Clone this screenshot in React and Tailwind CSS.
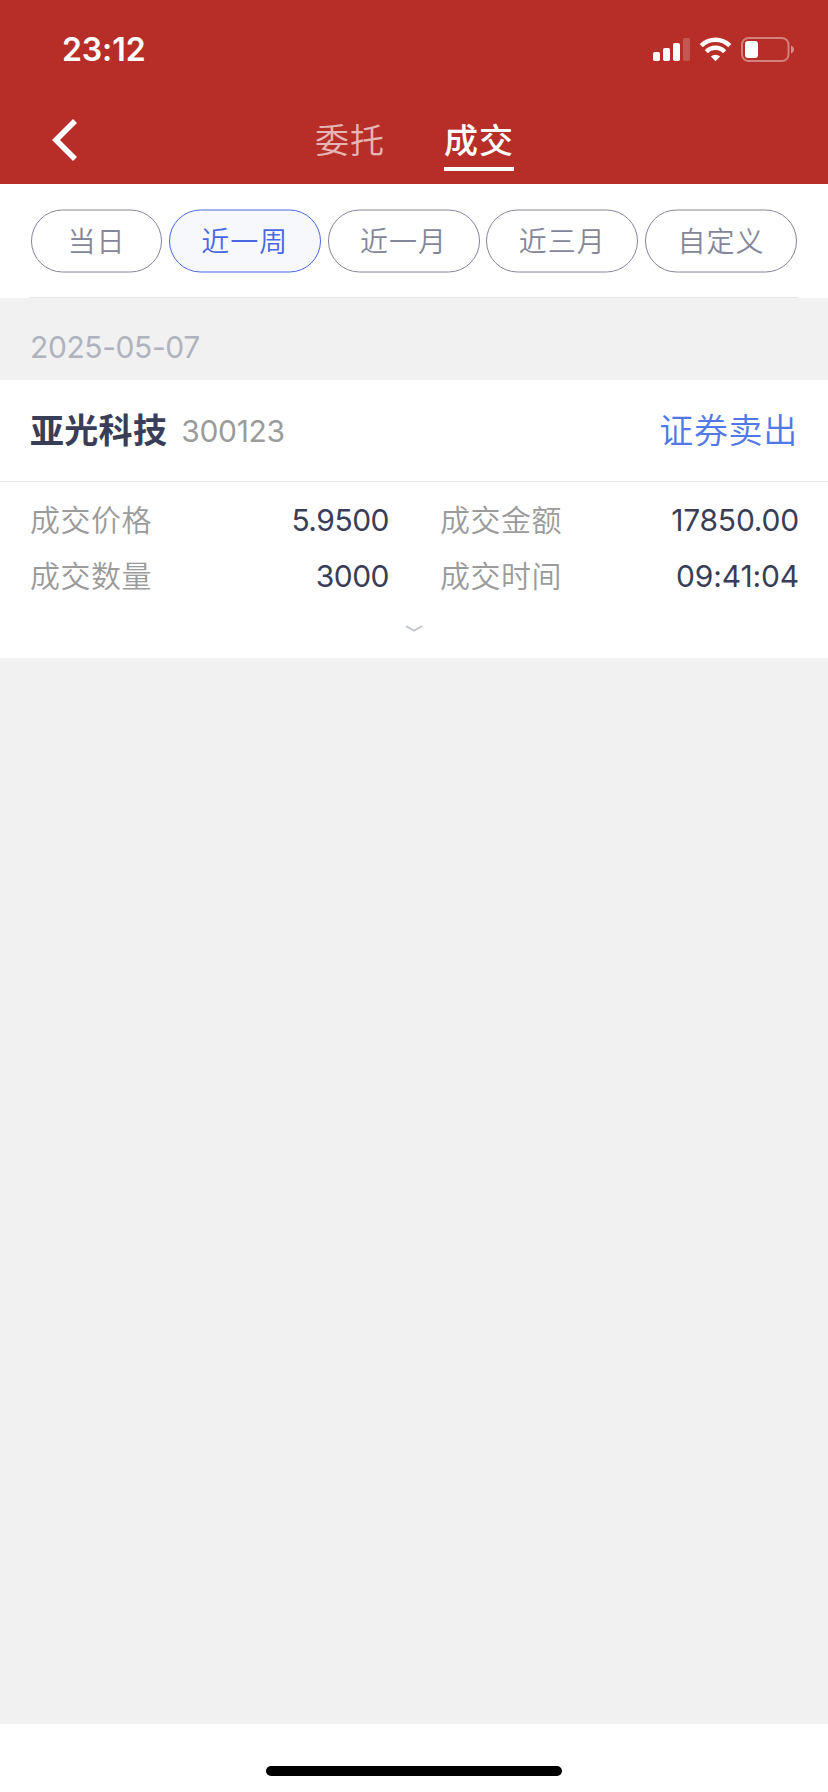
const FILTERS = [
  { label: '当日', width: 'w-[131px]' },
  { label: '近一周', width: 'w-[152px]', active: true },
  { label: '近一月', width: 'w-[152px]' },
  { label: '近三月', width: 'w-[152px]' },
  { label: '自定义', width: 'w-[152px]' },
];

const DETAILS = [
  { label: '成交价格', value: '5.9500', tracking: 'tracking-[-0.5px]' },
  { label: '成交金额', value: '17850.00', tracking: 'tracking-[-0.2px]' },
  { label: '成交数量', value: '3000', tracking: 'tracking-[-0.5px]' },
  { label: '成交时间', value: '09:41:04', tracking: 'tracking-[-0.15px]' },
];

function StatusIcons() {
  return (
    <svg className="h-[30px] w-[144px]" viewBox="650 34 144 30" fill="none">
      <g fill="#fff">
        <rect x="653" y="52" width="7" height="9" rx="1.8" />
        <rect x="663" y="48" width="7" height="13" rx="1.8" />
        <rect x="673" y="43" width="7" height="18" rx="1.8" />
        <rect x="683" y="38" width="7" height="23" rx="1.8" opacity="0.2" />
      </g>
      <g stroke="#fff" strokeWidth="4.4">
        <path d="M701.2 45.6A20.3 20.3 0 0 1 729.8 45.6" />
        <path d="M706.4 51.7A12.6 12.6 0 0 1 724.6 51.7" />
      </g>
      <path d="M710.9 56.6A6.4 6.4 0 0 1 720.1 56.6L715.5 61.2Z" fill="#fff" />
      <rect x="742" y="38" width="46.5" height="23" rx="6.5" stroke="#fff" strokeOpacity="0.4" strokeWidth="2" />
      <rect x="745" y="41" width="13" height="17" rx="3" fill="#fff" />
      <path d="M791 45.5C795 47 795 52 791 53.5Z" fill="#fff" fillOpacity="0.45" />
    </svg>
  );
}

export default function App() {
  return (
    <div className="flex h-[1792px] w-[828px] flex-col bg-[#f1f1f1] font-['Inter','Noto_Sans_CJK_SC',sans-serif]">
      <header className="h-[184px] bg-[#b72e28] text-white">
        <div className="flex h-[96px] items-start justify-between pt-[34px] pr-[34px] pl-[62px]">
          <span className="text-[32px] leading-[32px] font-[580] tracking-[-0.1px]">23:12</span>
          <StatusIcons />
        </div>
        <nav className="flex h-[88px] pl-[50px]">
          <svg className="mt-[20px] h-[48px] w-[30px]" viewBox="0 0 30 48" fill="none">
            <path d="M25 5L6 24L25 43" stroke="#fff" strokeWidth="5.6" />
          </svg>
          <div className="flex gap-[59px] pt-[19px] pl-[235px] text-[34px] leading-[52px] tracking-[1px]">
            <span className="h-[56px] w-[70px] font-[350] text-white/65">委托</span>
            <span className="h-[56px] w-[70px] border-b-4 border-white font-medium">成交</span>
          </div>
        </nav>
      </header>

      <section className="h-[114px] bg-white px-[30px]">
        <div className="flex h-[114px] justify-between border-b border-[#e6e6e8] px-px pt-[25px]">
          {FILTERS.map((f) => (
            <button
              key={f.label}
              className={`flex h-[63px] translate-y-[0.5px] items-center justify-center rounded-full border pt-px text-[28px] font-[350] tracking-[1px] ${f.width} ${
                f.active
                  ? 'border-[#4a68e2] bg-[#f6f8fc] text-[#4a68e2]'
                  : 'border-[#84879a] text-[#84879a]'
              }`}
            >
              {f.label}
            </button>
          ))}
        </div>
      </section>

      <div className="h-[82px] px-[30px] pt-[31px] text-[30px] leading-[36px] tracking-[-0.4px] text-[#b0b3be]">2025-05-07</div>

      <section className="h-[278px] bg-white">
        <div className="flex h-[102px] items-center justify-between border-b border-[#e6e6e8] px-[30px]">
          <div className="flex items-center gap-[14px]">
            <span className="text-[34px] leading-[50px] font-bold tracking-[0.3px] text-[#3a3d57]">亚光科技</span>
            <span className="text-[30px] leading-[36px] tracking-[-0.3px] text-[#9b9b9b]">300123</span>
          </div>
          <span className="text-[34px] leading-[50px] font-[350] tracking-[0.7px] text-[#5078e8]">证券卖出</span>
        </div>
        <div className="grid grid-cols-2 gap-x-[51px] pt-[10px] pr-[29px] pl-[30px]">
          {DETAILS.map((d) => (
            <div key={d.label} className="flex h-[56px] items-center justify-between text-[30px] leading-[56px]">
              <span className="font-[350] tracking-[0.5px] text-[#9b9b9b]">{d.label}</span>
              <span className={`text-[#3a3d57] ${d.tracking}`}>{d.value}</span>
            </div>
          ))}
        </div>
        <svg className="mx-auto mt-[20px] h-[10px] w-[20px]" viewBox="0 0 20 10" fill="none">
          <path d="M2 2L10 6.8L18 2" stroke="#c0c3cd" strokeWidth="1.6" />
        </svg>
      </section>

      <footer className="mt-auto flex h-[68px] justify-center bg-white pt-[42px]">
        <div className="h-[10px] w-[296px] rounded-full bg-black" />
      </footer>
    </div>
  );
}
